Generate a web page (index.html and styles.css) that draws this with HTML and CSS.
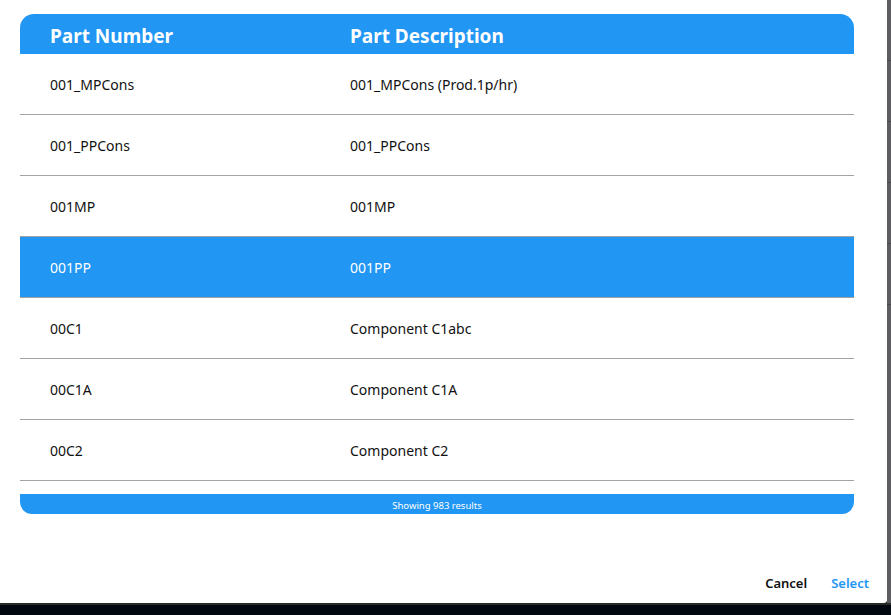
FILE: index.html
```html
<!DOCTYPE html>
<html>
<head>
<meta charset="utf-8">
<link rel="stylesheet" href="styles.css">
</head>
<body>
<div class="screen">
  <div class="top">
    <div class="dialog">
      <div class="table">
        <div class="thead">
          <div class="col1">Part Number</div>
          <div class="col2">Part Description</div>
        </div>
        <div class="tbody">
          <div class="row"><div class="col1">001_MPCons</div><div class="col2">001_MPCons (Prod.1p/hr)</div></div>
          <div class="row"><div class="col1">001_PPCons</div><div class="col2">001_PPCons</div></div>
          <div class="row"><div class="col1">001MP</div><div class="col2">001MP</div></div>
          <div class="row selected"><div class="col1">001PP</div><div class="col2">001PP</div></div>
          <div class="row"><div class="col1">00C1</div><div class="col2">Component C1abc</div></div>
          <div class="row"><div class="col1">00C1A</div><div class="col2">Component C1A</div></div>
          <div class="row"><div class="col1">00C2</div><div class="col2">Component C2</div></div>
        </div>
        <div class="tfoot">Showing 983 results</div>
      </div>
      <div class="actions">
        <button class="btn cancel">Cancel</button>
        <button class="btn select">Select</button>
      </div>
    </div>
    <div class="backdrop">
      <div class="bline"></div><div class="bline"></div><div class="bline"></div><div class="bline"></div><div class="bline"></div>
    </div>
  </div>
  <div class="taskbar"></div>
</div>
</body>
</html>
```
FILE: styles.css
```css
html, body {
  margin: 0;
  padding: 0;
}
body {
  width: 891px;
  height: 615px;
  overflow: hidden;
  background: #02080f;
  font-family: "Noto Sans", "Open Sans", sans-serif;
}
.screen {
  display: flex;
  flex-direction: column;
  height: 615px;
}
.top {
  display: flex;
  height: 603px;
}
.dialog {
  width: 887px;
  height: 603px;
  background: #ffffff;
  border-bottom-right-radius: 3px;
  box-sizing: border-box;
  padding: 14px 0 0 20px;
  display: flex;
  flex-direction: column;
}
.table {
  width: 834px;
  display: flex;
  flex-direction: column;
}
.thead {
  height: 40px;
  box-sizing: border-box;
  padding-top: 3px;
  background: #2196f3;
  border-radius: 14px 14px 0 0;
  display: flex;
  align-items: center;
  color: #ffffff;
  font-weight: 700;
  font-size: 19px;
}
.col1 {
  width: 330px;
  padding-left: 30px;
  box-sizing: border-box;
}
.col2 {
  flex: 1;
}
.tbody {
  height: 440px;
  overflow: hidden;
}
.row {
  height: 60px;
  border-bottom: 1px solid #a3a3a3;
  display: flex;
  align-items: center;
  font-size: 14px;
  color: #111111;
}
.row.selected {
  background: #2196f3;
  color: #ffffff;
}
.tfoot {
  height: 20px;
  box-sizing: border-box;
  padding-top: 2px;
  background: #2196f3;
  border-radius: 0 0 12px 12px;
  color: #ffffff;
  font-size: 9.5px;
  display: flex;
  align-items: center;
  justify-content: center;
}
.actions {
  margin-top: auto;
  display: flex;
  justify-content: flex-end;
  padding: 0 14px 7px 0;
}
.btn {
  border: none;
  background: none;
  font-family: inherit;
  font-weight: 600;
  font-size: 13px;
  padding: 4px 12px;
  cursor: pointer;
}
.cancel {
  color: #111111;
}
.select {
  color: #2196f3;
  padding-right: 4px;
}
.backdrop {
  flex: 1;
  background: #5e5d62;
  display: flex;
  flex-direction: column;
  padding-top: 60px;
  gap: 60px;
}
.bline {
  height: 1px;
  background: #48474b;
}
.taskbar {
  flex: 1;
  background: #02080f;
  border-top: 2px solid #2a2a2a;
}
```
